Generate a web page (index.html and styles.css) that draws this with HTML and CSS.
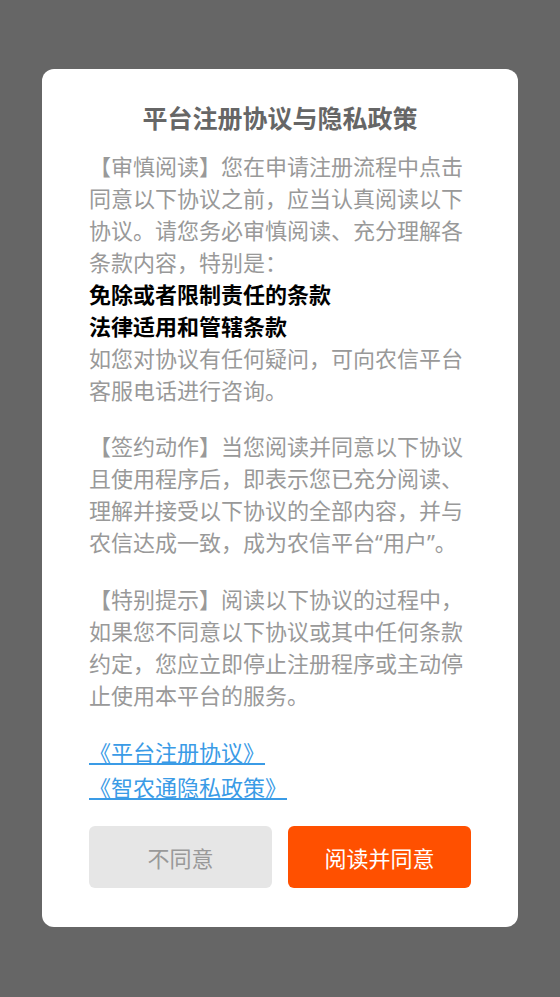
FILE: index.html
```html
<!DOCTYPE html>
<html lang="zh-CN">
<head>
  <meta charset="UTF-8" />
  <meta name="viewport" content="width=device-width, initial-scale=1.0"/>
  <title>平台注册协议与隐私政策</title>
  <link rel="stylesheet" href="styles.css">
</head>
<body>
  <div id="overlay">
    <div class="dialog">
      <h3 class="dialog-title">平台注册协议与隐私政策</h3>

      <p class="dialog-text">【审慎阅读】您在申请注册流程中点击同意以下协议之前，应当认真阅读以下协议。请您务必审慎阅读、充分理解各条款内容，特别是：<br>
        <b class="strong">免除或者限制责任的条款</b><br>
        <b class="strong">法律适用和管辖条款</b><br>
        如您对协议有任何疑问，可向农信平台客服电话进行咨询。</p>

      <p class="dialog-text">【签约动作】当您阅读并同意以下协议且使用程序后，即表示您已充分阅读、理解并接受以下协议的全部内容，并与农信达成一致，成为农信平台<span class="quote">“</span>用户<span class="quote">”</span>。</p>

      <p class="dialog-text">【特别提示】阅读以下协议的过程中，如果您不同意以下协议或其中任何条款约定，您应立即停止注册程序或主动停止使用本平台的服务。</p>

      <div class="links">
        <a href="#">《平台注册协议》</a>
        <a href="#">《智农通隐私政策》</a>
      </div>

      <div class="actions">
        <button class="dialog-btn disagree">不同意</button>
        <button class="dialog-btn agree">阅读并同意</button>
      </div>
    </div>
  </div>
</body>
</html>
```

FILE: styles.css
```css
body {
  margin: 0;
  font-family: "Noto Sans CJK SC", "Noto Sans", sans-serif;
  background: #666666;
}

#overlay {
  min-height: 997px;
  padding-top: 69px;
  box-sizing: border-box;
}

.dialog {
  width: 476px;
  margin: 0 auto;
  background: #fff;
  border-radius: 12px;
  padding: 32px 47px 39px;
  box-sizing: border-box;
}

.dialog-title {
  margin: 0 0 16px;
  font-size: 25px;
  line-height: 32px;
  font-weight: bold;
  color: #666;
  text-align: center;
}

.dialog-text {
  margin: 0 0 24px;
  font-size: 22px;
  line-height: 32px;
  color: #999;
}

.strong {
  color: #000;
  font-weight: bold;
}

.quote {
  font-family: "Noto Sans", sans-serif;
}

.links {
  display: flex;
  flex-direction: column;
  align-items: flex-start;
  margin-bottom: 22px;
}

.links a {
  font-size: 22px;
  line-height: 35px;
  color: #3a9be6;
}

.actions {
  display: flex;
  gap: 16px;
}

.dialog-btn {
  flex: 1;
  height: 62px;
  border: none;
  border-radius: 6px;
  font-family: inherit;
  font-size: 22px;
  cursor: pointer;
}

.disagree {
  background: #e6e6e6;
  color: #999;
}

.agree {
  background: #ff5000;
  color: #fff;
}
```
